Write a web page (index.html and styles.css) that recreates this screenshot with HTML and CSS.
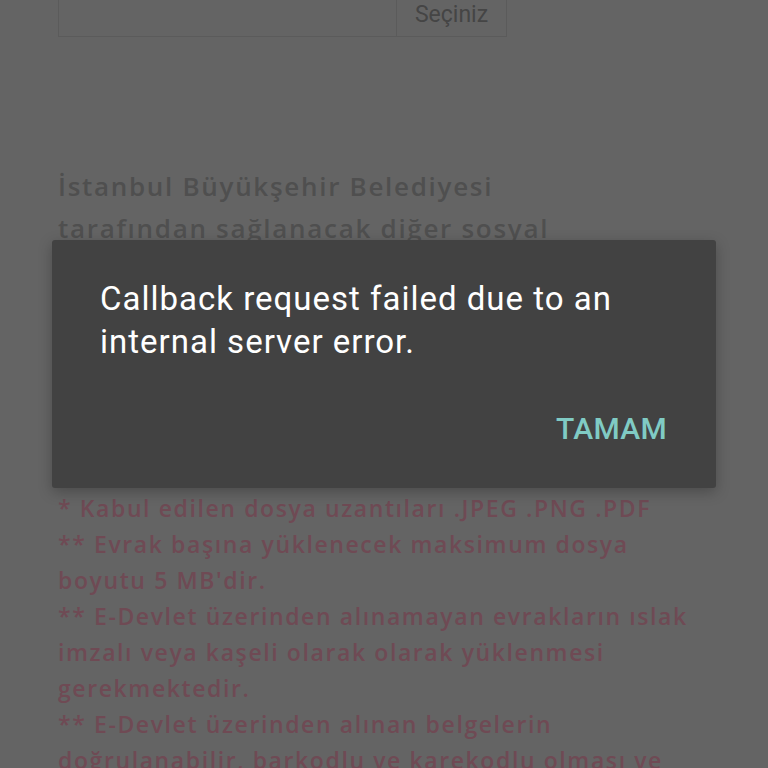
FILE: index.html
```html
<!DOCTYPE html>
<html lang="tr">
<head>
<meta charset="utf-8">
<link rel="stylesheet" href="styles.css">
</head>
<body>
<div class="page">
  <div class="field">
    <div class="field-input"></div>
    <div class="field-btn">Seçiniz</div>
  </div>
  <h2 class="question">İstanbul Büyükşehir Belediyesi tarafından sağlanacak diğer sosyal yardımlardan yararlanıyor musunuz? Yararlanıyorsanız lütfen belirtiniz.</h2>
</div>
<div class="notes">
  <p>* Kabul edilen dosya uzantıları .JPEG .PNG .PDF</p>
  <p>** Evrak başına yüklenecek maksimum dosya boyutu 5 MB'dir.</p>
  <p>** E-Devlet üzerinden alınamayan evrakların ıslak imzalı veya kaşeli olarak olarak yüklenmesi gerekmektedir.</p>
  <p>** E-Devlet üzerinden alınan belgelerin doğrulanabilir, barkodlu ve karekodlu olması ve</p>
</div>
<div class="dialog">
  <p class="dialog-msg">Callback request failed due to an internal server error.</p>
  <div class="dialog-actions">
    <span class="dialog-btn">TAMAM</span>
  </div>
</div>
</body>
</html>
```

FILE: styles.css
```css
html, body {
  margin: 0;
  padding: 0;
  background: #646464;
  overflow: hidden;
  height: 768px;
}
.page {
  padding: 0 58px;
  font-family: "Open Sans", "Noto Sans", sans-serif;
}
.field {
  display: flex;
  width: 449px;
  height: 48px;
  margin-top: -11px;
  border: 1px solid #5b5b5b;
  box-sizing: border-box;
}
.field-input {
  flex: 1;
}
.field-btn {
  width: 110px;
  border-left: 1px solid #5b5b5b;
  display: flex;
  align-items: center;
  justify-content: center;
  padding-top: 3px;
  box-sizing: border-box;
  font-family: Roboto, sans-serif;
  font-size: 23px;
  color: #454545;
}
.question {
  margin: 128px 0 0;
  width: 560px;
  font-size: 26px;
  font-weight: 600;
  letter-spacing: 1.7px;
  line-height: 42px;
  color: #4f4f4f;
}
.notes {
  position: absolute;
  top: 490px;
  left: 58px;
  width: 640px;
  font-family: "Open Sans", "Noto Sans", sans-serif;
  font-size: 23px;
  font-weight: 600;
  letter-spacing: 1.6px;
  line-height: 36px;
  color: #6f4a54;
}
.notes p {
  margin: 0;
}
.dialog {
  position: absolute;
  left: 52px;
  top: 240px;
  width: 664px;
  height: 248px;
  box-sizing: border-box;
  background: #424242;
  border-radius: 3px;
  box-shadow: 0 4px 14px rgba(0, 0, 0, 0.25);
  padding: 37px 48px 0;
  font-family: Roboto, sans-serif;
}
.dialog-msg {
  margin: 0;
  font-size: 33px;
  letter-spacing: 1px;
  line-height: 43px;
  color: #ffffff;
}
.dialog-actions {
  display: flex;
  justify-content: flex-end;
  margin-top: 48px;
  padding-right: 1px;
}
.dialog-btn {
  font-size: 30px;
  font-weight: 500;
  color: #80cbc4;
  letter-spacing: 0.3px;
}
```
